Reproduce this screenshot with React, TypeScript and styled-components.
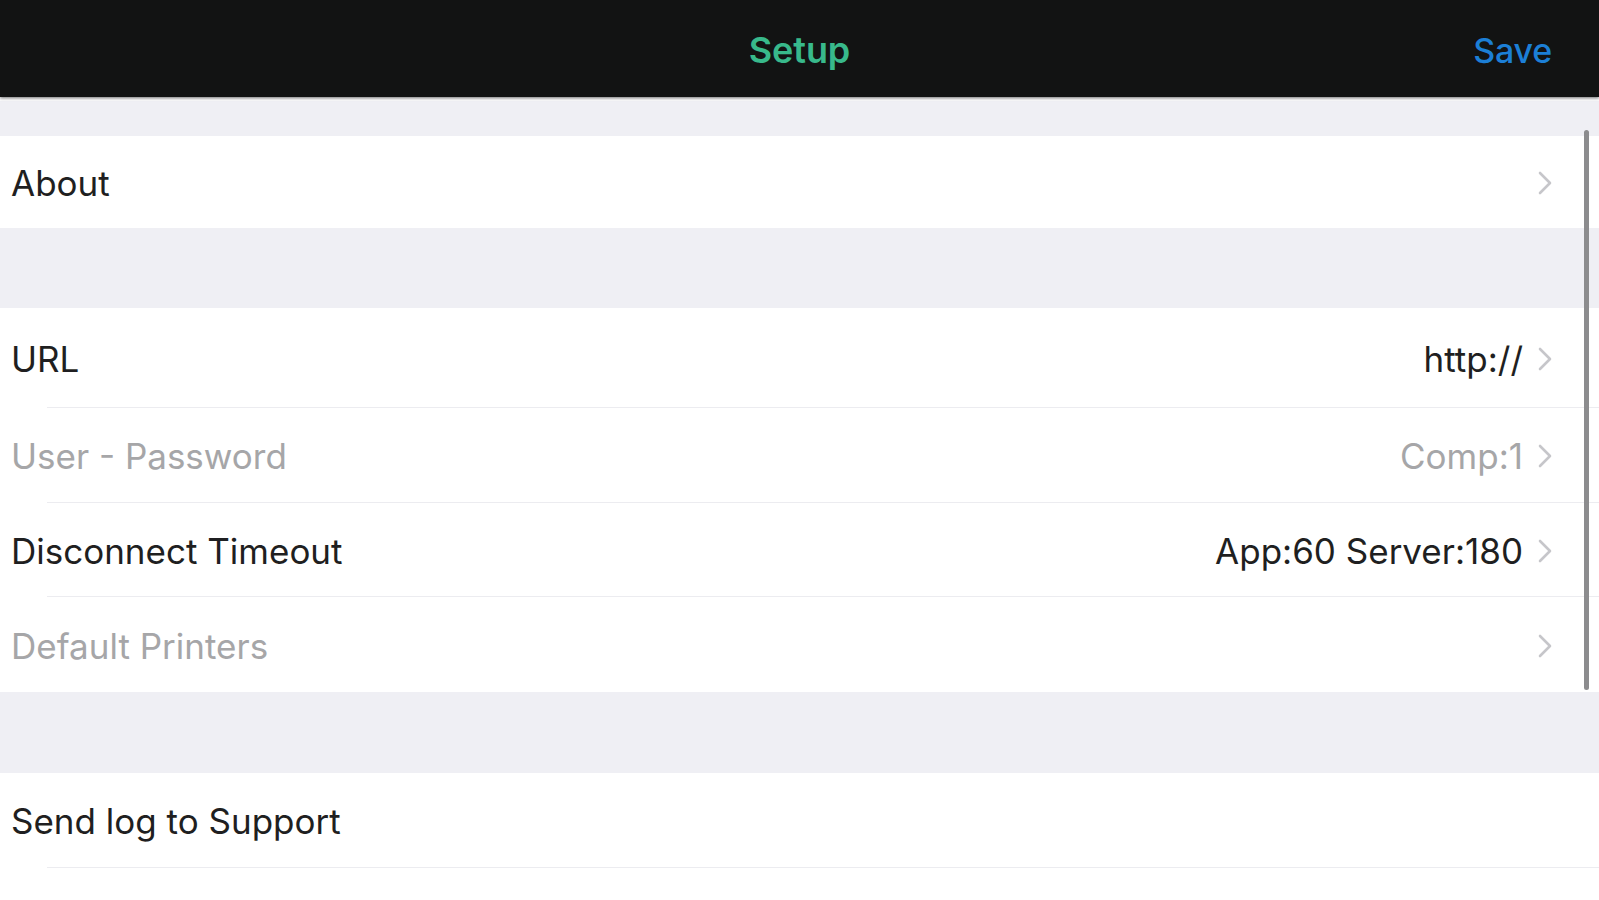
import React from "react";
import styled, { createGlobalStyle } from "styled-components";

const GlobalStyle = createGlobalStyle`
  html, body {
    margin: 0;
    padding: 0;
    background: #ffffff;
    font-family: Inter, "Noto Sans", "Liberation Sans", sans-serif;
    -webkit-font-smoothing: antialiased;
  }
  #root {
    height: 900px;
    overflow: hidden;
  }
`;

const Screen = styled.div`
  width: 1599px;
  height: 900px;
  display: flex;
  flex-direction: column;
  background: #ffffff;
  overflow: hidden;
`;

const NavBar = styled.header`
  flex: 0 0 97px;
  background: #121313;
  display: grid;
  grid-template-columns: 1fr auto 1fr;
  align-items: start;
  padding: 30px 47px 0 47px;
  box-sizing: border-box;
  box-shadow: 0 1px 3px rgba(0, 0, 0, 0.55);
  position: relative;
  z-index: 2;
`;

const NavTitle = styled.div`
  grid-column: 2;
  font-size: 36px;
  line-height: 41px;
  font-weight: 600;
  color: #38b98b;
  letter-spacing: -0.1px;
`;

const NavAction = styled.div`
  grid-column: 3;
  justify-self: end;
  font-size: 34px;
  line-height: 41px;
  font-weight: 500;
  color: #1c7fd6;
  letter-spacing: -0.2px;
`;

const Body = styled.div`
  flex: 1;
  position: relative;
  display: flex;
  flex-direction: column;
  background: #ffffff;
`;

const SectionGap = styled.div<{ $h: number; $top?: boolean }>`
  flex: 0 0 ${(p) => p.$h}px;
  background: #efeff4;
  box-sizing: border-box;
  ${(p) => (p.$top ? "border-top: 4px solid #fbfbfc;" : "")}
`;

const Row = styled.div<{ $h: number }>`
  flex: 0 0 ${(p) => p.$h}px;
  display: flex;
  flex-direction: column;
  background: #ffffff;
`;

const RowContent = styled.div`
  flex: 1;
  display: flex;
  align-items: center;
  padding: 2px 46px 0 11px;
`;

const Separator = styled.div`
  height: 1px;
  margin-left: 47px;
  background: #ececf0;
`;

const Label = styled.span<{ $muted?: boolean }>`
  flex: 1;
  font-size: 35px;
  font-weight: 400;
  letter-spacing: 0;
  color: ${(p) => (p.$muted ? "#a6a6a8" : "#1f1f21")};
`;

const Value = styled.span<{ $muted?: boolean }>`
  font-size: 35px;
  font-weight: 400;
  letter-spacing: 0;
  color: ${(p) => (p.$muted ? "#a6a6a8" : "#1f1f21")};
  margin-right: 14px;
`;

const Chevron = styled.svg`
  width: 16px;
  height: 26px;
  flex: 0 0 auto;
`;

const ScrollIndicator = styled.div`
  position: absolute;
  right: 10px;
  top: 33px;
  width: 5px;
  height: 560px;
  border-radius: 3px;
  background: #8c8c8e;
`;

const Filler = styled.div`
  flex: 1;
  background: #ffffff;
`;

const ChevronIcon = () => (
  <Chevron viewBox="0 0 16 26" fill="none">
    <polyline
      points="3,3 13,13 3,23"
      stroke="#c6c6ca"
      strokeWidth="2.6"
      strokeLinecap="round"
      strokeLinejoin="round"
    />
  </Chevron>
);

type Item = {
  label: string;
  value?: string;
  muted?: boolean;
  chevron?: boolean;
  h: number;
  sep?: boolean;
};

const SettingRow = ({ item }: { item: Item }) => (
  <Row $h={item.h}>
    <RowContent>
      <Label $muted={item.muted}>{item.label}</Label>
      {item.value && <Value $muted={item.muted}>{item.value}</Value>}
      {item.chevron && <ChevronIcon />}
    </RowContent>
    {item.sep && <Separator />}
  </Row>
);

const section1: Item[] = [{ label: "About", chevron: true, h: 92 }];

const section2: Item[] = [
  { label: "URL", value: "http://", chevron: true, h: 100, sep: true },
  { label: "User - Password", value: "Comp:1", muted: true, chevron: true, h: 95, sep: true },
  { label: "Disconnect Timeout", value: "App:60 Server:180", chevron: true, h: 94, sep: true },
  { label: "Default Printers", muted: true, chevron: true, h: 95 },
];

const section3: Item[] = [{ label: "Send log to Support", h: 95, sep: true }];

export default function App() {
  return (
    <>
      <GlobalStyle />
      <Screen>
        <NavBar>
          <NavTitle>Setup</NavTitle>
          <NavAction>Save</NavAction>
        </NavBar>
        <Body>
          <SectionGap $h={39} $top />
          {section1.map((it) => (
            <SettingRow key={it.label} item={it} />
          ))}
          <SectionGap $h={80} />
          {section2.map((it) => (
            <SettingRow key={it.label} item={it} />
          ))}
          <SectionGap $h={81} />
          {section3.map((it) => (
            <SettingRow key={it.label} item={it} />
          ))}
          <Filler />
          <ScrollIndicator />
        </Body>
      </Screen>
    </>
  );
}
